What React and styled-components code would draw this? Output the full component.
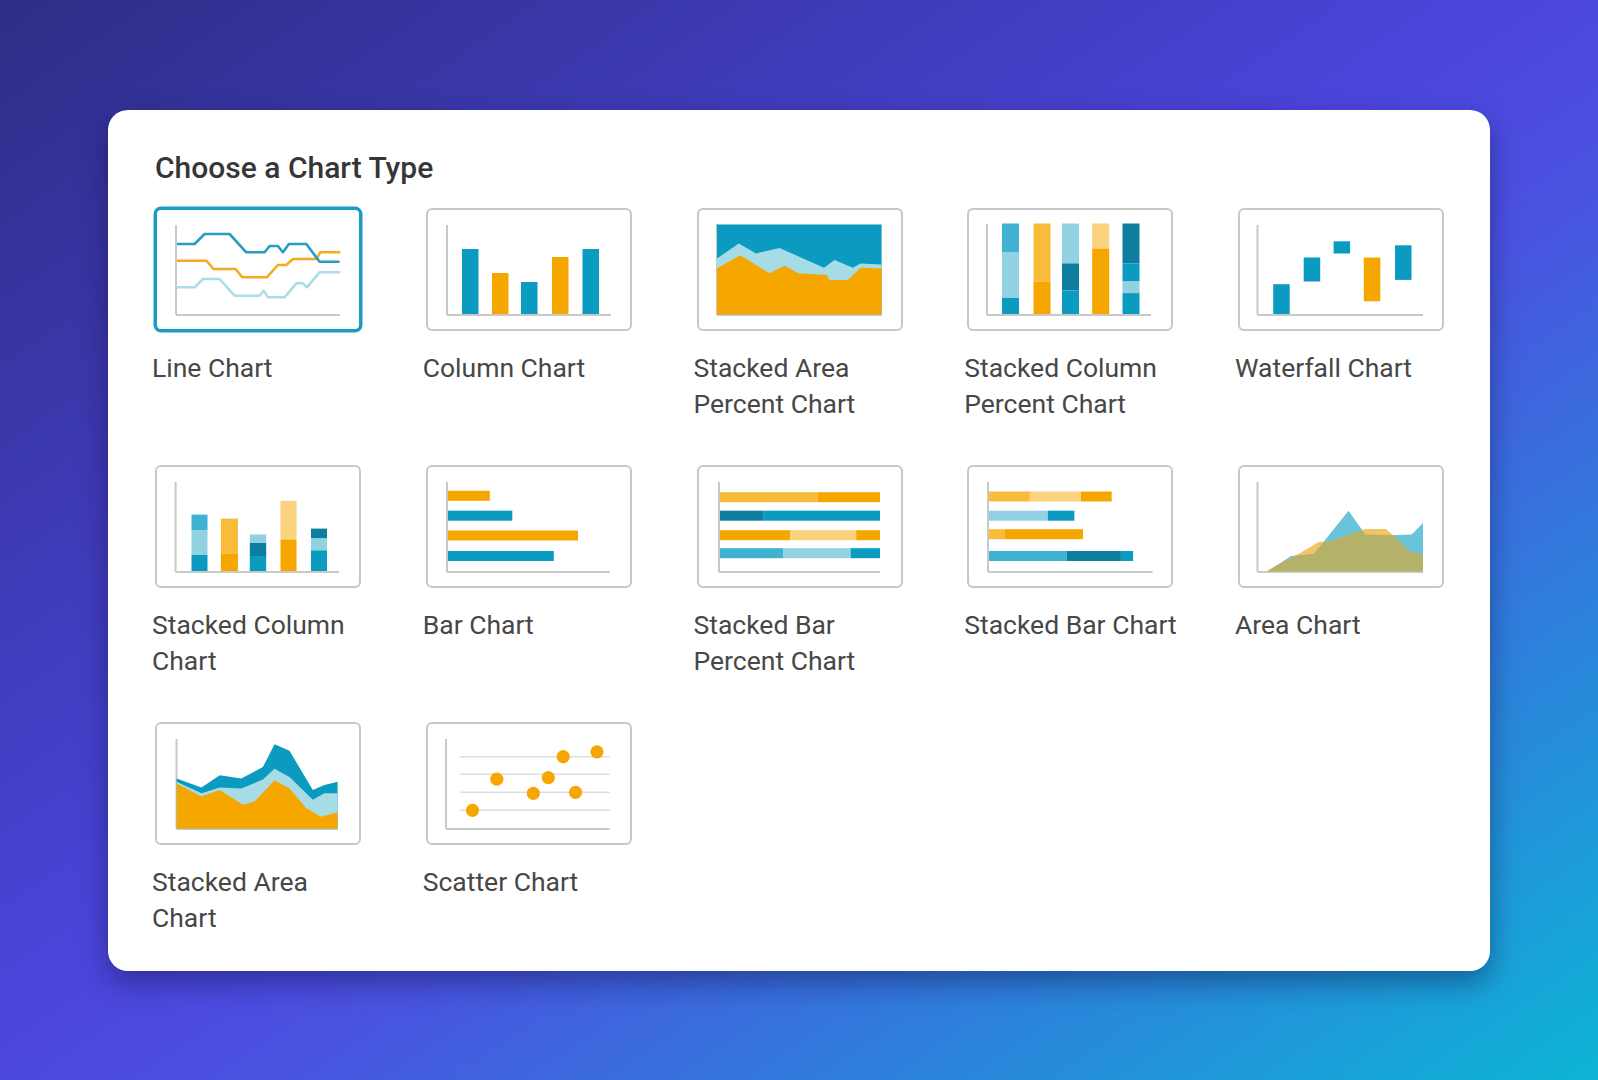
import React from "react";
import styled, { createGlobalStyle } from "styled-components";

const T = "#0b9bc1";
const TD = "#0f7e9e";
const TM = "#3fb1d1";
const TL = "#90d2e2";
const O = "#f5a700";
const OL = "#f8bb3a";
const OP = "#fbd27e";
const AX = "#c9c9c9";

const GlobalStyle = createGlobalStyle`
  html, body { margin: 0; padding: 0; }
  body { font-family: Roboto, "Liberation Sans", Arial, sans-serif; }
`;

const Page = styled.div`
  min-height: 100vh;
  display: flex;
  align-items: center;
  justify-content: center;
  background: linear-gradient(to bottom right, #2f2d86 0%, #4c45dd 48%, #4a52e0 58%, #0db5d6 100%);
`;

const Card = styled.section`
  width: 1382px;
  box-sizing: border-box;
  padding: 41px 45px 35px 47px;
  background: #ffffff;
  border-radius: 20px;
  box-shadow: 0 12px 28px rgba(10, 10, 60, 0.4);
`;

const Title = styled.h2`
  margin: 0 0 23px 0;
  font-size: 30px;
  font-weight: 500;
  line-height: 34px;
  color: #363636;
`;

const Grid = styled.div`
  display: grid;
  grid-template-columns: repeat(5, 206px);
  column-gap: 64.75px;
  row-gap: 43px;
`;

const Option = styled.div`
  display: flex;
  flex-direction: column;
  cursor: pointer;
`;

const Thumb = styled.div`
  width: 206px;
  height: 123px;
  box-sizing: border-box;
  border: 2px solid ${(p) => (p.$selected ? "#1a9cc3" : "#c8c8c8")};
  border-radius: 6px;
  box-shadow: ${(p) => (p.$selected ? "0 0 0 1.5px #1a9cc3" : "none")};
  background: #fff;
  overflow: hidden;
  svg { display: block; }
`;

const Label = styled.div`
  width: 222px;
  margin: 19px 0 0 -3px;
  font-size: 26.5px;
  line-height: 36px;
  color: #474747;
`;

const Axes = ({ x0 = 21, y0 = 17, y1 = 107, x1 = 185 }) => (
  <g stroke={AX} strokeWidth="2" fill="none">
    <line x1={x0} y1={y0} x2={x0} y2={y1} />
    <line x1={x0} y1={y1} x2={x1} y2={y1} />
  </g>
);

const Svg = ({ children }) => (
  <svg width="202" height="119" viewBox="2 2 202 119">
    {children}
  </svg>
);

const pts = (a) => a.map((p) => p.join(",")).join(" ");

const LineChart = () => (
  <Svg>
    <Axes />
    <g fill="none" strokeWidth="2.6" strokeLinejoin="round">
      <polyline
        stroke="#acdde7"
        points={pts([[22, 79.3], [39.6, 79.3], [48, 71], [64.6, 71], [79.6, 87.7], [104.6, 87.7], [108.6, 82.7], [112.9, 89.3], [129.6, 89.3], [141.3, 75.3], [147.9, 75.3], [151.9, 79.3], [164.6, 64.3], [185.3, 64.3]])}
      />
      <polyline
        stroke="#f3ab1c"
        points={pts([[22, 52.7], [51.3, 52.7], [58.6, 61], [80.6, 61], [87.3, 69.3], [111.9, 69.3], [122.9, 57], [131.3, 57], [137.9, 51], [161.3, 51], [165.3, 44.3], [185.3, 44.3]])}
      />
      <polyline
        stroke="#259ec1"
        points={pts([[22, 36], [39.6, 36], [49.6, 26], [74.6, 26], [91.3, 44.3], [109.6, 44.3], [114.6, 38], [122.9, 38], [127.9, 44.3], [133.9, 36], [151.3, 36], [164.6, 53.7], [184.6, 53.7]])}
      />
    </g>
  </Svg>
);

const ColumnChart = () => {
  const bars = [
    [36, 41, T],
    [66, 65, O],
    [95, 74, T],
    [126, 49, O],
    [156.5, 41, T],
  ];
  return (
    <Svg>
      <Axes />
      {bars.map(([x, y, c], i) => (
        <rect key={i} x={x} y={y} width="16.5" height={106 - y} fill={c} />
      ))}
    </Svg>
  );
};

const StackedAreaPercent = () => {
  const lt = [[19.9, 50.5], [41.8, 35.6], [59.1, 45.5], [82.6, 39.9], [106.1, 50.5], [127, 59.7], [137.5, 52.1], [155.8, 59.7], [163.7, 55.4], [184.6, 56.4]];
  const or = [[19.9, 60.4], [43.4, 47.2], [72.2, 65.3], [87.9, 57.7], [101, 65.3], [129.8, 66.9], [132.4, 71.9], [150.7, 71.9], [163.7, 59.7], [184.6, 60.4]];
  return (
    <Svg>
      <Axes x0={20} y0={16} x1={185} />
      <rect x="20" y="16.5" width="164.6" height="90" fill={T} />
      <polygon points={pts([...lt, [184.6, 106.5], [19.9, 106.5]])} fill="#a6dce6" />
      <polygon points={pts([...or, [184.6, 106.5], [19.9, 106.5]])} fill={O} />
    </Svg>
  );
};

const Stack = ({ x, w = 17, segs, bottom = 106 }) => (
  <g>
    {segs.map(([y0, y1, c], i) => (
      <rect key={i} x={x} y={y0} width={w} height={Math.min(y1, bottom) - y0} fill={c} />
    ))}
  </g>
);

const StackedColumnPercent = () => (
  <Svg>
    <Axes x0={20} y0={16} x1={184} />
    <Stack x={35} segs={[[15.5, 44, TM], [44, 90, TL], [90, 106, T]]} />
    <Stack x={66.5} segs={[[15.5, 73.5, OL], [73.5, 106, O]]} />
    <Stack x={95} segs={[[15.5, 55.4, TL], [55.4, 82.4, TD], [82.4, 106, T]]} />
    <Stack x={125.2} segs={[[15.5, 40.6, OP], [40.6, 106, O]]} />
    <Stack x={155.5} segs={[[15.5, 55.4, TD], [55.4, 73.5, T], [73.5, 85.1, TL], [85.1, 106, T]]} />
  </Svg>
);

const WaterfallChart = () => {
  const bars = [
    [35.2, 76.2, 106, T],
    [65.7, 49.5, 73.5, T],
    [95.6, 33.3, 45.5, T],
    [125.8, 49.5, 93.3, O],
    [157, 37.3, 71.9, T],
  ];
  return (
    <Svg>
      <Axes x0={19.5} y0={17} x1={185} />
      {bars.map(([x, y0, y1, c], i) => (
        <rect key={i} x={x} y={y0} width="16.5" height={y1 - y0} fill={c} />
      ))}
    </Svg>
  );
};

const StackedColumnChart = () => (
  <Svg>
    <Axes x0={20.6} y0={17} x1={184} />
    <Stack x={36.5} w={16} segs={[[49.6, 65.5, TM], [65.5, 90, TL], [90, 106, T]]} />
    <Stack x={65.9} w={17} segs={[[53.6, 88.4, OL], [88.4, 106, O]]} />
    <Stack x={94.8} w={16.4} segs={[[69.5, 78, TL], [78, 91, TD], [91, 106, T]]} />
    <Stack x={125.5} w={16} segs={[[35.8, 74.5, OP], [74.5, 106, O]]} />
    <Stack x={156} w={16} segs={[[63.6, 73.5, TD], [73.5, 85.4, TL], [85.4, 106, T]]} />
  </Svg>
);

const BarChart = () => {
  const bars = [
    [25.8, 63.8, O],
    [45.7, 86.3, T],
    [65.5, 152, O],
    [86, 127.8, T],
  ];
  return (
    <Svg>
      <Axes x0={21} y0={17} x1={184} />
      {bars.map(([y, x1, c], i) => (
        <rect key={i} x="22" y={y} width={x1 - 22} height="10" fill={c} />
      ))}
    </Svg>
  );
};

const HStack = ({ y, h = 10, segs }) => (
  <g>
    {segs.map(([x0, x1, c], i) => (
      <rect key={i} x={x0} y={y} width={x1 - x0} height={h} fill={c} />
    ))}
  </g>
);

const StackedBarPercent = () => (
  <Svg>
    <Axes x0={22} y0={17} x1={183} />
    <HStack y={27.2} segs={[[23, 120.5, OL], [120.5, 183, O]]} />
    <HStack y={45.7} segs={[[23, 66.1, TD], [66.1, 183, T]]} />
    <HStack y={65.2} segs={[[23, 93, O], [93, 159.2, OP], [159.2, 183, O]]} />
    <HStack y={83.2} segs={[[23, 86.5, TM], [86.5, 153.6, TL], [153.6, 183, T]]} />
  </Svg>
);

const StackedBarChart = () => (
  <Svg>
    <Axes x0={21} y0={17} x1={185.6} />
    <HStack y={26.5} segs={[[22, 62.9, OL], [62.9, 114, OP], [114, 144.7, O]]} />
    <HStack y={45.7} segs={[[22, 80.8, TL], [80.8, 107.4, T]]} />
    <HStack y={64.2} segs={[[22, 37.3, OL], [37.3, 116, O]]} />
    <HStack y={86} segs={[[22, 99.7, TM], [99.7, 153.9, TD], [153.9, 166.1, T]]} />
  </Svg>
);

const AreaChart = () => {
  const teal = pts([[29.8, 106.6], [52.9, 91], [76, 88.7], [110.5, 45.7], [127.4, 69.5], [153.1, 70.2], [173.7, 69.5], [185, 57.9], [185, 106.6]]);
  const orange = pts([[27.2, 106.6], [62, 88], [81.2, 76.8], [91.4, 76.8], [127.4, 63.9], [148, 63.9], [160.8, 75.5], [171, 86], [185, 89.4], [185, 106.6]]);
  return (
    <Svg>
      <defs>
        <clipPath id="area-teal-clip">
          <polygon points={teal} />
        </clipPath>
      </defs>
      <Axes x0={19.5} y0={17} x1={185} />
      <polygon points={teal} fill="#6ac4d9" />
      <polygon points={orange} fill="#f3c467" />
      <polygon points={orange} fill="#b4b16a" clipPath="url(#area-teal-clip)" />
    </Svg>
  );
};

const StackedAreaChart = () => {
  const tt = [[21.6, 56.6], [46.5, 65.4], [64.7, 53.3], [86.3, 56.6], [107.9, 45.1], [119.5, 22.2], [134.5, 28.8], [157.8, 68], [169.4, 63.1], [182.6, 59.8]];
  const lt = [[21.6, 59.8], [46.5, 71.3], [64.7, 65.4], [86.3, 66.4], [107.9, 57.6], [119.5, 46.7], [134.5, 54.9], [157.8, 77.8], [169.4, 71.3], [182.6, 71.3]];
  const or = [[21.6, 61.5], [46.5, 74.6], [64.7, 68], [88, 82.7], [99.6, 79.5], [119.5, 58.2], [134.5, 66.4], [151.1, 86], [166, 94.8], [182.6, 90.3]];
  const base = [[182.6, 106.6], [21.6, 106.6]];
  return (
    <Svg>
      <Axes x0={21.6} y0={17} x1={183} />
      <polygon points={pts([...tt, ...base])} fill={T} />
      <polygon points={pts([...lt, ...base])} fill="#a6dce6" />
      <polygon points={pts([...or, ...base])} fill={O} />
    </Svg>
  );
};

const ScatterChart = () => {
  const dots = [[46.5, 88.3], [70.8, 57.2], [107.3, 71.3], [122.3, 55.6], [137.2, 34.7], [149.5, 70.3], [171, 29.8]];
  return (
    <Svg>
      <g stroke="#dedede" strokeWidth="1.6">
        {[34.7, 52.3, 70.3, 88.3].map((y) => (
          <line key={y} x1="34.3" y1={y} x2="183.6" y2={y} />
        ))}
      </g>
      <Axes x0={20} y0={17} x1={183.6} />
      {dots.map(([x, y], i) => (
        <circle key={i} cx={x} cy={y} r="6.6" fill={O} />
      ))}
    </Svg>
  );
};

const charts = [
  { name: "Line Chart", C: LineChart, selected: true },
  { name: "Column Chart", C: ColumnChart },
  { name: "Stacked Area Percent Chart", C: StackedAreaPercent },
  { name: "Stacked Column Percent Chart", C: StackedColumnPercent },
  { name: "Waterfall Chart", C: WaterfallChart },
  { name: "Stacked Column Chart", C: StackedColumnChart },
  { name: "Bar Chart", C: BarChart },
  { name: "Stacked Bar Percent Chart", C: StackedBarPercent },
  { name: "Stacked Bar Chart", C: StackedBarChart },
  { name: "Area Chart", C: AreaChart },
  { name: "Stacked Area Chart", C: StackedAreaChart },
  { name: "Scatter Chart", C: ScatterChart },
];

export default function App() {
  return (
    <>
      <GlobalStyle />
      <Page>
        <Card>
          <Title>Choose a Chart Type</Title>
          <Grid>
            {charts.map(({ name, C, selected }) => (
              <Option key={name}>
                <Thumb $selected={selected}>
                  <C />
                </Thumb>
                <Label>{name}</Label>
              </Option>
            ))}
          </Grid>
        </Card>
      </Page>
    </>
  );
}
